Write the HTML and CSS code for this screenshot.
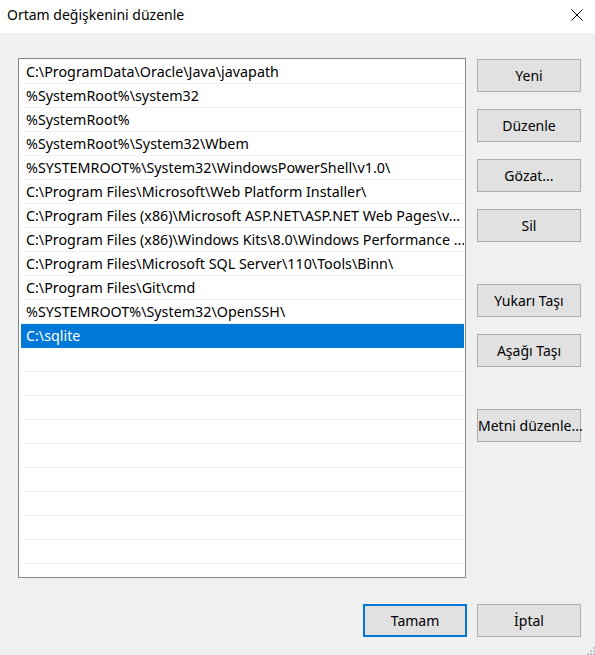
FILE: index.html
```html
<!DOCTYPE html>
<html lang="tr">
<head>
<meta charset="utf-8">
<title>Ortam değişkenini düzenle</title>
<link rel="stylesheet" href="styles.css">
</head>
<body>
<div class="window">
  <div class="titlebar">
    <span class="title">Ortam değişkenini düzenle</span>
    <svg class="close" width="12" height="12" viewBox="0 0 12 12"><path d="M0.5 0.5 L11.5 11.5 M11.5 0.5 L0.5 11.5" stroke="#000" stroke-width="1" fill="none"/></svg>
  </div>
  <div class="content">
    <div class="main">
      <div class="list">
        <div class="row">C:\ProgramData\Oracle\Java\javapath</div>
        <div class="row">%SystemRoot%\system32</div>
        <div class="row">%SystemRoot%</div>
        <div class="row">%SystemRoot%\System32\Wbem</div>
        <div class="row">%SYSTEMROOT%\System32\WindowsPowerShell\v1.0\</div>
        <div class="row">C:\Program Files\Microsoft\Web Platform Installer\</div>
        <div class="row">C:\Program Files (x86)\Microsoft ASP.NET\ASP.NET Web Pages\v...</div>
        <div class="row">C:\Program Files (x86)\Windows Kits\8.0\Windows Performance ...</div>
        <div class="row">C:\Program Files\Microsoft SQL Server\110\Tools\Binn\</div>
        <div class="row">C:\Program Files\Git\cmd</div>
        <div class="row">%SYSTEMROOT%\System32\OpenSSH\</div>
        <div class="row selected">C:\sqlite</div>
        <div class="row"></div>
        <div class="row"></div>
        <div class="row"></div>
        <div class="row"></div>
        <div class="row"></div>
        <div class="row"></div>
        <div class="row"></div>
        <div class="row"></div>
        <div class="row"></div>
      </div>
      <div class="side">
        <button class="btn">Yeni</button>
        <button class="btn">Düzenle</button>
        <button class="btn">Gözat...</button>
        <button class="btn">Sil</button>
        <button class="btn group">Yukarı Taşı</button>
        <button class="btn">Aşağı Taşı</button>
        <button class="btn group">Metni düzenle...</button>
      </div>
    </div>
    <div class="footer">
      <button class="btn default">Tamam</button>
      <button class="btn">İptal</button>
    </div>
    <svg class="grip" width="10" height="10" viewBox="0 0 10 10">
      <rect x="8" y="2" width="2" height="2" fill="#c4c4c4"/>
      <rect x="5" y="5" width="2" height="2" fill="#c4c4c4"/>
      <rect x="8" y="5" width="2" height="2" fill="#c4c4c4"/>
      <rect x="2" y="8" width="2" height="2" fill="#c4c4c4"/>
      <rect x="5" y="8" width="2" height="2" fill="#c4c4c4"/>
      <rect x="8" y="8" width="2" height="2" fill="#c4c4c4"/>
    </svg>
  </div>
</div>
</body>
</html>
```

FILE: styles.css
```css
* { box-sizing: border-box; }
html, body {
  margin: 0;
  padding: 0;
  width: 595px;
  height: 655px;
  overflow: hidden;
  background: #f0f0f0;
  font-family: "Noto Sans", "Open Sans", sans-serif;
  font-size: 14px;
  color: #000;
}
.window {
  width: 595px;
  height: 655px;
  display: flex;
  flex-direction: column;
}
.titlebar {
  height: 33px;
  background: #fff;
  display: flex;
  align-items: center;
  justify-content: space-between;
  padding: 0 12px 4px 7px;
  flex: none;
}
.title {
  font-size: 14px;
  color: #000;
}
.close { display: block; }
.content {
  position: relative;
  flex: 1;
  background: #f0f0f0;
  padding: 25px 14px 0 18px;
  display: flex;
  flex-direction: column;
}
.main {
  display: flex;
  gap: 11px;
}
.list {
  width: 448px;
  height: 520px;
  border: 1px solid #828790;
  background: #fff;
  padding: 1px 1px 0 2px;
  overflow: hidden;
}
.row {
  height: 24px;
  line-height: 23px;
  border-bottom: 1px solid #f0f0f0;
  padding-left: 5px;
  font-size: 14.3px;
  white-space: nowrap;
  overflow: hidden;
}
.row.selected {
  background: #0078d7;
  border-bottom-color: #0078d7;
  color: #fff;
}
.side {
  display: flex;
  flex-direction: column;
  gap: 17px;
  padding-top: 1px;
}
.btn {
  width: 104px;
  height: 33px;
  background: #e1e1e1;
  border: 1px solid #adadad;
  font-family: inherit;
  font-size: 14px;
  color: #000;
  padding: 0;
  margin: 0;
  white-space: nowrap;
}
.side .group { margin-top: 25px; }
.footer {
  display: flex;
  justify-content: flex-end;
  gap: 10px;
  margin-top: 26px;
}
.btn.default {
  border: 2px solid #0078d7;
}
.grip {
  position: absolute;
  right: 0;
  bottom: 0;
}
```
